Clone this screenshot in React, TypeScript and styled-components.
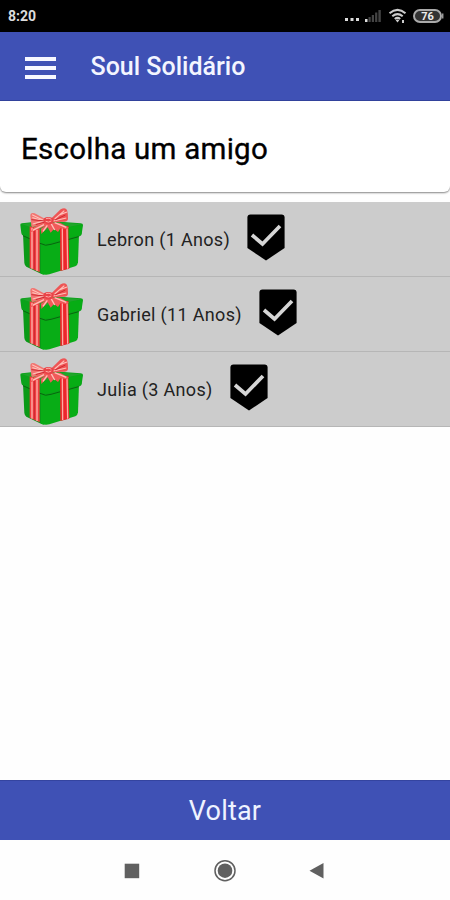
import React from 'react';
import styled, { createGlobalStyle } from 'styled-components';

const GlobalStyle = createGlobalStyle`
  *, *::before, *::after { box-sizing: border-box; }
  body { margin: 0; background: #fff; font-family: Roboto, "Liberation Sans", sans-serif; }
`;

const Screen = styled.div`
  display: flex;
  flex-direction: column;
  width: 450px;
  height: 900px;
  overflow: hidden;
  background: #fefefe;
`;

const StatusBar = styled.div`
  display: flex;
  justify-content: space-between;
  flex: none;
  height: 32px;
  padding-left: 8px;
  background: #000;
`;

const Clock = styled.span`
  color: #dcdcdc;
  font-size: 14px;
  font-weight: 700;
  line-height: 33px;
`;

const StatusIcons = styled.svg`
  display: block;
  width: 110px;
  height: 32px;
`;

const AppBar = styled.header`
  display: flex;
  align-items: center;
  flex: none;
  height: 69px;
  padding-left: 25px;
  gap: 34.5px;
  background: #3f51b5;
  border-bottom: 1px solid #3444a0;
`;

const MenuButton = styled.button`
  display: flex;
  flex-direction: column;
  gap: 5px;
  width: 31px;
  margin-top: 4px;
  padding: 0;
  border: 0;
  background: none;
`;

const MenuLine = styled.span`
  height: 4px;
  background: #f7f8ff;
`;

const AppTitle = styled.h1`
  margin: 0;
  padding-top: 2px;
  color: #f3f5ff;
  font-size: 25px;
  font-weight: 500;
  line-height: 66px;
  white-space: nowrap;
`;

const HeadingCard = styled.section`
  flex: none;
  height: 91px;
  margin-bottom: 10px;
  padding-left: 21px;
  background: #fff;
  border-radius: 0 0 6px 6px;
  box-shadow: 0 1px 2px rgba(0, 0, 0, 0.48);
`;

const Heading = styled.h2`
  margin: 0;
  color: #000;
  font-size: 29.5px;
  font-weight: 400;
  letter-spacing: 0.25px;
  line-height: 96px;
  -webkit-text-stroke: 0.35px #000;
`;

const FriendList = styled.ul`
  flex: none;
  margin: 0;
  padding: 0;
  list-style: none;
`;

const FriendRow = styled.li`
  display: flex;
  height: 75px;
  padding-left: 15px;
  background: #ccc;
  border-bottom: 1px solid #b6b6b6;
`;

const GiftArt = styled.svg`
  display: block;
  flex: none;
  width: 75px;
  height: 72px;
  margin-top: 1px;
`;

const FriendName = styled.span`
  margin: 0 17.4px 0 7px;
  color: #222;
  font-size: 18px;
  letter-spacing: 0.32px;
  line-height: 75px;
  white-space: nowrap;
`;

const Badge = styled.svg`
  display: block;
  width: 38px;
  height: 47px;
  margin-top: 12px;
`;

const BackButton = styled.button`
  flex: none;
  height: 60px;
  margin-top: auto;
  padding: 0;
  border: 0;
  border-top: 1px solid #3444a0;
  background: #3f51b5;
  color: #eef3ff;
  font-family: inherit;
  font-size: 27px;
  letter-spacing: 0.2px;
  line-height: 58px;
`;

const SystemNav = styled.nav`
  flex: none;
  display: flex;
  align-items: center;
  justify-content: center;
  gap: 69px;
  height: 60px;
  background: #fefefe;
`;

const NavIcon = styled.svg`
  display: block;
  width: 24px;
  height: 24px;
`;

function Gift() {
  return (
    <GiftArt viewBox="0 0 225 216">
      <path d="M24 92 L88 104 V214 Q84 215 78 212 L34 191 Q29 188 28 180Z" fill="#0a9a17" />
      <path d="M78 108 L192 94 L189 178 Q188 187 181 190 L103 214 Q90 217 78 212Z" fill="#08ad16" />
      <path d="M16 66 Q15 62 21 61 L92 53 L197 61 Q204 61 204 66 L200 94 Q199 99 194 100 L104 124 Q91 128 77 121 L25 98 Q20 96 19 91Z" fill="#0ba31a" />
      <path d="M77 83 L202 65 L199 93 L192 97 L104 121 Q88 124 78 119Z" fill="#06ad14" />
      <path d="M20 63 L92 54 L200 64 L128 79 L77 83Z" fill="#20a52b" />
      <path d="M24 98 L75 121 Q92 131 108 124 L191 101" fill="none" stroke="#08650f" strokeWidth="3" />
      <path d="M44 70 L74 78 V208 L44 194Z" fill="#ef3e40" />
      <path d="M51 74 V197 M66 80 V204" stroke="#ffb5ae" strokeWidth="4" />
      <path d="M58 78 V200" stroke="#c92730" strokeWidth="3" />
      <path d="M135 73 L160 68 L163 197 L136 204Z" fill="#ed262c" />
      <path d="M142 76 L143 201 M156 74 L158 197" stroke="#ffaba4" strokeWidth="4" />
      <path d="M92 68 L44 89 L58 72 L85 57 L135 59 L162 74 L155 79 L137 75 L129 87 L117 78 L107 89 L98 73 L79 93 L78 77Z" fill="#f15a59" />
      <path d="M87 65 L53 82 M108 61 L119 81 M119 59 L154 73 M97 67 L84 85" stroke="#ffc0b9" strokeWidth="4" />
      <path d="M91 48 L59 31 Q46 27 46 38 L49 69 Q51 75 61 70 L96 58Z" fill="#f27470" />
      <path d="M108 47 L137 19 Q151 12 156 21 Q160 34 159 48 Q157 58 144 56 L108 58Z" fill="#ee5555" />
      <path d="M51 35 L85 52 M53 63 L91 53 M52 44 L76 51 M119 48 L148 23 M115 54 L154 45 M135 35 L156 27" fill="none" stroke="#ffc0b9" strokeWidth="3.5" />
      <path d="M49 50 L90 54 M120 51 L151 36 M62 65 L90 57" stroke="#cf2830" strokeWidth="3" />
      <path d="M87 46 Q98 38 113 45 Q119 53 111 62 Q99 67 90 61 Q83 54 87 46Z" fill="#e94448" />
      <path d="M93 47 Q103 43 109 49 M92 55 Q101 60 109 54" fill="none" stroke="#ffaaa5" strokeWidth="3" />
    </GiftArt>
  );
}

function CheckBadge() {
  return (
    <Badge viewBox="0 0 38 47">
      <path d="M3.5 0.5 H34.5 Q37.6 0.5 37.6 3.5 V34 L19 46.5 L0.4 34 V3.5 Q0.4 .5 3.5 .5Z" fill="#000" />
      <path d="M5 21 L15.5 30 L33 12" fill="none" stroke="#d6d6d6" strokeWidth="3.7" />
    </Badge>
  );
}

const friends = ['Lebron (1 Anos)', 'Gabriel (11 Anos)', 'Julia (3 Anos)'];

export default function App() {
  return (
    <Screen>
      <GlobalStyle />
      <StatusBar>
        <Clock>8:20</Clock>
        <StatusIcons viewBox="340 0 110 32">
          <path d="M345 18h3v3h-3z M350.5 18h3v3h-3z M356 18h3v3h-3z" fill="#ddd" />
          <path d="M365 19h2.5v3H365z" fill="#ddd" />
          <path d="M368.5 17h2.2v5h-2.2z M371.8 15h2.2v7h-2.2z M375.1 12.5h2.2V22h-2.2z M378.4 10h2.4v12h-2.4z" fill="#444" />
          <path d="M389.5 13.2Q397.5 6.5 405.5 13.2 M392.3 16.3Q397.5 12 402.7 16.3 M394.8 19Q397.5 16.8 400.2 19" fill="none" stroke="#ccc" strokeWidth="2.1" />
          <path d="M395.7 20.2Q397.5 18.8 399.3 20.2L397.5 22.5Z M402 20h2v3h-2z" fill="#ccc" />
          <rect x="414" y="10" width="27" height="12" rx="6" fill="#333" stroke="#aaa" strokeWidth="2" />
          <path d="M442.7 13.5v5" stroke="#999" strokeWidth="1.5" />
          <text x="427.5" y="20" textAnchor="middle" fontFamily="Roboto, sans-serif" fontSize="11" fontWeight="700" fill="#eee">76</text>
        </StatusIcons>
      </StatusBar>
      <AppBar>
        <MenuButton aria-label="Menu">
          <MenuLine />
          <MenuLine />
          <MenuLine />
        </MenuButton>
        <AppTitle>Soul Solidário</AppTitle>
      </AppBar>
      <HeadingCard>
        <Heading>Escolha um amigo</Heading>
      </HeadingCard>
      <FriendList>
        {friends.map((name) => (
          <FriendRow key={name}>
            <Gift />
            <FriendName>{name}</FriendName>
            <CheckBadge />
          </FriendRow>
        ))}
      </FriendList>
      <BackButton>Voltar</BackButton>
      <SystemNav>
        <NavIcon viewBox="0 0 24 24">
          <path d="M4.7 5.7h14.5v14.5H4.7z" fill="#606060" />
        </NavIcon>
        <NavIcon viewBox="0 0 24 24">
          <circle cx="12" cy="12.7" r="10" fill="none" stroke="#606060" strokeWidth="1.5" />
          <circle cx="12" cy="12.7" r="7.3" fill="#606060" />
        </NavIcon>
        <NavIcon viewBox="0 0 24 24">
          <path d="M3.5 12.7L17.5 5v15.5z" fill="#606060" />
        </NavIcon>
      </SystemNav>
    </Screen>
  );
}
